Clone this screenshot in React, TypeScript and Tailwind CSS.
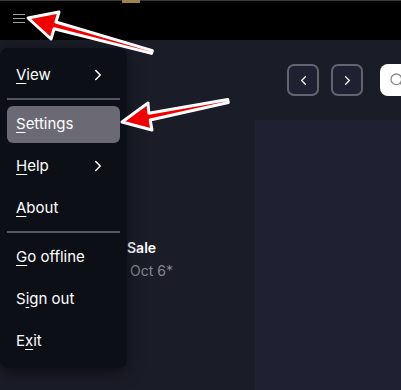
import React from 'react';
import { ChevronRight, ChevronLeft, Search } from 'lucide-react';

type Item = { label: string; key: number; sub?: boolean; active?: boolean } | 'sep';

const items: Item[] = [
  { label: 'View', key: 0, sub: true },
  'sep',
  { label: 'Settings', key: 0, active: true },
  { label: 'Help', key: 0, sub: true },
  { label: 'About', key: 0 },
  'sep',
  { label: 'Go offline', key: 0 },
  { label: 'Sign out', key: 1 },
  { label: 'Exit', key: 1 },
];

function Label({ text, k }: { text: string; k: number }) {
  return (
    <span>
      {text.slice(0, k)}
      <span className="underline underline-offset-[3px] decoration-1">{text[k]}</span>
      {text.slice(k + 1)}
    </span>
  );
}

function Menu() {
  return (
    <div className="absolute left-0 top-[48px] w-[127px] rounded-lg bg-[#0d0f16] px-[7px] py-[6px] shadow-[0_4px_16px_rgba(0,0,0,0.5)]">
      {items.map((it, i) =>
        it === 'sep' ? (
          <div key={i} className="pt-[2px] pb-[3px]">
            <div className="h-[2px] bg-[#55565e]" />
          </div>
        ) : (
          <div key={i} className="h-[42px] flex items-center">
            <div
              className={
                'w-full h-[37px] rounded-md flex items-center justify-between pl-[9px] pr-[16px] text-[15px] text-white ' +
                (it.active ? 'bg-[#6b6a74]' : '')
              }
            >
              <Label text={it.label} k={it.key} />
              {it.sub && <ChevronRight className="w-[18px] h-[18px] -mr-[3px]" strokeWidth={2} />}
            </div>
          </div>
        )
      )}
    </div>
  );
}

function Arrows() {
  return (
    <svg className="absolute inset-0 pointer-events-none" width="401" height="390" viewBox="0 0 401 390">
      <polygon
        points="28,18 59,12 55.9,22 152.4,50.6 151.6,53.4 54.1,28.8 51,39"
        fill="#f00000"
        stroke="white"
        strokeWidth="3"
        strokeLinejoin="round"
      />
      <polygon
        points="122,122 148,103 148.8,113.2 227.7,99.5 228.3,102.5 150.2,120 152,130"
        fill="#f00000"
        stroke="white"
        strokeWidth="3"
        strokeLinejoin="round"
      />
    </svg>
  );
}

export default function App() {
  return (
    <div
      className="relative w-[401px] h-[390px] overflow-hidden bg-[#1a1c28] flex flex-col"
      style={{ fontFamily: 'Inter, "Noto Sans", sans-serif' }}
    >
      <div className="h-10 bg-black relative shrink-0">
        <div className="h-px bg-[#3a3a3a]" />
        <div className="absolute left-[122px] top-0 w-[18px] h-[3px] bg-[#9b8450]" />
        <div className="absolute left-[13px] top-[14px] flex flex-col gap-[3px]">
          <div className="w-[12px] h-px bg-[#a0a0a0]" />
          <div className="w-[12px] h-px bg-[#a0a0a0]" />
          <div className="w-[12px] h-px bg-[#a0a0a0]" />
        </div>
      </div>

      <div className="h-[80px] shrink-0 flex items-start pt-6 pl-[287px] gap-[12px]">
        <button className="w-[32px] h-[32px] shrink-0 rounded-[7px] border-2 border-[#62646f] bg-[#1f2133] flex items-center justify-center text-white">
          <ChevronLeft className="w-[15px] h-[15px]" strokeWidth={2} />
        </button>
        <button className="w-[32px] h-[32px] shrink-0 rounded-[7px] border-2 border-[#62646f] bg-[#1f2133] flex items-center justify-center text-white">
          <ChevronRight className="w-[15px] h-[15px]" strokeWidth={2} />
        </button>
        <div className="ml-[5px] w-[60px] h-[32px] shrink-0 rounded-lg bg-white flex items-center pl-[9px] text-[#8a8a8a]">
          <Search className="w-[16px] h-[16px]" strokeWidth={2} />
        </div>
      </div>

      <div className="flex flex-1">
        <div className="w-[255px] shrink-0 pt-[119px] pl-[127px]">
          <div className="text-[14px] font-semibold text-white leading-[18px]">Sale</div>
          <div className="text-[14px] text-[#858791] leading-[18px] mt-[5px] pl-[3px]">Oct 6*</div>
        </div>
        <div className="flex-1 bg-[#1f2133]" />
      </div>

      <Menu />
      <Arrows />
    </div>
  );
}
